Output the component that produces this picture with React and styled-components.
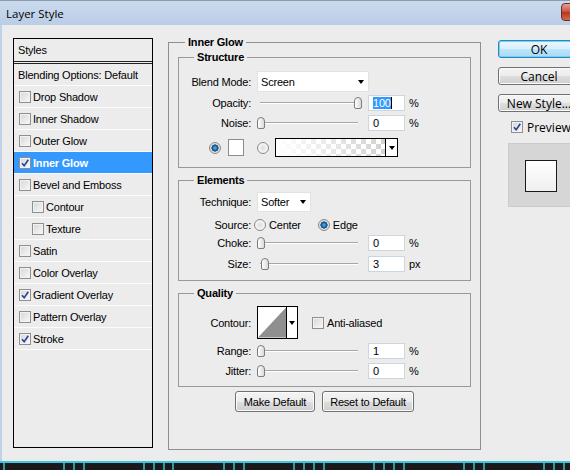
import React from "react";
import styled, { createGlobalStyle } from "styled-components";

const GlobalStyle = createGlobalStyle`
  html, body {
    margin: 0;
    padding: 0;
    background: #ececec;
  }
  body {
    font-family: "Liberation Sans", Arial, sans-serif;
    font-size: 11px;
    letter-spacing: -0.2px;
    color: #000;
  }
`;

const STYLE_ROWS = [
  { name: "Drop Shadow" },
  { name: "Inner Shadow" },
  { name: "Outer Glow" },
  { name: "Inner Glow", checked: true, active: true },
  { name: "Bevel and Emboss" },
  { name: "Contour", indent: true },
  { name: "Texture", indent: true },
  { name: "Satin" },
  { name: "Color Overlay" },
  { name: "Gradient Overlay", checked: true },
  { name: "Pattern Overlay" },
  { name: "Stroke", checked: true },
];

const TICKS = [3, 63, 73, 83, 143, 153, 163, 172, 223, 233, 243, 293, 303, 313, 323, 373, 383, 393, 403, 463, 473, 483, 543, 553, 563];

const Window = styled.div`
  width: 570px;
  height: 470px;
  display: flex;
  flex-direction: column;
  overflow: hidden;
  background: #ececec;
`;

const TitleBar = styled.div`
  height: 25px;
  flex: none;
  display: flex;
  align-items: center;
  justify-content: space-between;
  background: linear-gradient(#cbdbee, #b9cde6);
  border-top: 1px solid #8c9cb0;
  box-sizing: border-box;
  padding-left: 6px;
`;

const Title = styled.div`
  font-family: "Open Sans", "Liberation Sans", sans-serif;
  font-size: 11.5px;
  letter-spacing: 0;
  color: #000;
`;

const CloseButton = styled.div`
  width: 30px;
  height: 16px;
  margin-top: -3px;
  margin-right: -23px;
  border: 1px solid #6b2f2a;
  border-radius: 4px 0 0 4px;
  background: linear-gradient(#e3a092, #c9503f 50%, #b8321f 51%, #d06a4e);
`;

const Body = styled.div`
  flex: 1;
  display: flex;
  align-items: flex-start;
  border-left: 2px solid #bfd2ea;
  padding: 10px 0 0 11px;
  overflow: hidden;
`;

/* ---- left list ---- */
const StylesPanel = styled.div`
  width: 140px;
  height: 410px;
  flex: none;
  margin-top: 3px;
  box-sizing: border-box;
  border: 1px solid #000;
  display: flex;
  flex-direction: column;
`;

const PanelHeader = styled.div`
  height: 22px;
  display: flex;
  align-items: center;
  padding-left: 4px;
  border-bottom: 3px double #222;
`;

const BlendRow = styled.div`
  height: 21px;
  display: flex;
  align-items: center;
  padding-left: 4px;
  border-bottom: 1px solid #fbfbfb;
`;

const StyleRow = styled.div`
  height: 21px;
  display: flex;
  align-items: center;
  gap: 2px;
  padding-left: ${(p) => (p.$indent ? 18 : 5)}px;
  border-bottom: 1px solid #fbfbfb;
  background: ${(p) => (p.$active ? "#3399ff" : "transparent")};
  color: ${(p) => (p.$active ? "#fff" : "#000")};
  font-weight: ${(p) => (p.$active ? "bold" : "normal")};
`;

const CheckBox = styled.span`
  width: 12px;
  height: 12px;
  flex: none;
  box-sizing: border-box;
  border: 1px solid #8e8f8f;
  background: linear-gradient(135deg, #d6d6d6, #f9f9f9);
  display: inline-flex;
  align-items: center;
  justify-content: center;
  box-shadow: inset 0 0 0 1px #f2f2f2;
`;

const Check = ({ checked }) => (
  <CheckBox>
    {checked && (
      <svg width="10" height="10" viewBox="0 0 10 10">
        <path d="M2 5.2 L4.2 7.8 L8.3 1.8" fill="none" stroke="#2a3f9a" strokeWidth="1.6" />
      </svg>
    )}
  </CheckBox>
);

/* ---- main group ---- */
const MainGroup = styled.fieldset`
  width: 313px;
  height: 415px;
  flex: none;
  box-sizing: border-box;
  margin: 0 0 0 15px;
  padding: 0 9px;
  border: 1px solid #8f8f8f;
  min-inline-size: 0;
`;

const Legend = styled.legend`
  font-weight: bold;
  line-height: 14px;
  padding: 0 3px;
  margin-left: ${(p) => p.$ml}px;
`;

const Group = styled.fieldset`
  margin: ${(p) => p.$mt}px 0 0 0;
  padding: 0 0 ${(p) => p.$pb}px 0;
  border: 1px solid #999;
  min-inline-size: 0;
`;

const Row = styled.div`
  display: flex;
  align-items: center;
  height: ${(p) => p.$h || 20}px;
  margin-top: ${(p) => p.$mt || 0}px;
  padding-left: ${(p) => p.$pl || 0}px;
`;

const Label = styled.div`
  width: 72px;
  flex: none;
  text-align: right;
  margin-right: ${(p) => (p.$tight ? 3 : 6)}px;
`;

const Dropdown = styled.div`
  width: ${(p) => p.$w}px;
  height: ${(p) => p.$h}px;
  box-sizing: border-box;
  background: #fff;
  border: 1px solid #e2e2e2;
  display: flex;
  align-items: center;
  justify-content: space-between;
  padding: 0 4px 0 3px;
`;

const Arrow = styled.span`
  width: 0;
  height: 0;
  border-left: 3.5px solid transparent;
  border-right: 3.5px solid transparent;
  border-top: 4px solid #000;
`;

const SliderBox = styled.div`
  width: 105px;
  height: 14px;
  flex: none;
  position: relative;
`;

const Track = styled.div`
  position: absolute;
  left: 3px;
  right: 4px;
  top: 6px;
  height: 1px;
  background: #a6a6a6;
  border-bottom: 1px solid #fff;
`;

const Thumb = styled.div`
  position: absolute;
  top: 1px;
  width: 8px;
  height: 12px;
  box-sizing: border-box;
  border: 1px solid #7d7d7d;
  border-radius: 4px 4px 2px 2px;
  background: linear-gradient(90deg, #ffffff, #d9d9d9);
`;

const Slider = ({ pos }) => (
  <SliderBox>
    <Track />
    <Thumb style={{ left: Math.round(pos * 97) }} />
  </SliderBox>
);

const Field = styled.div`
  width: 37px;
  height: 16px;
  flex: none;
  box-sizing: border-box;
  margin-left: 6px;
  background: #fff;
  border: 1px solid #cdd6e0;
  padding-left: 4px;
  display: flex;
  align-items: center;
`;

const Selected = styled.span`
  background: #3399ff;
  color: #fff;
  border-right: 1px solid #000;
`;

const Unit = styled.div`
  margin-left: 4px;
`;

const Radio = styled.span`
  width: 12px;
  height: 12px;
  flex: none;
  box-sizing: border-box;
  border-radius: 50%;
  border: 1px solid #8a8a8a;
  background: ${(p) =>
    p.$on
      ? "radial-gradient(circle, #5ab4f0 0, #1a70b4 2.2px, #0d3a66 3.3px, #d4d4d4 3.8px, #f3f3f3 6px)"
      : "radial-gradient(circle, #dcdcdc 0, #eeeeee 3px, #fafafa 6px)"};
  margin-left: ${(p) => p.$ml || 0}px;
`;

const Option = styled.div`
  display: flex;
  align-items: center;
  gap: 3px;
  margin-left: ${(p) => p.$ml || 0}px;
`;

const Swatch = styled.div`
  width: 16px;
  height: 17px;
  box-sizing: border-box;
  margin-left: 7px;
  background: #fff;
  border: 1px solid #8c8c8c;
`;

const GradientPicker = styled.div`
  width: 123px;
  height: 19px;
  box-sizing: border-box;
  margin-left: 6px;
  border: 1px solid #000;
  display: flex;
`;

const GradientFill = styled.div`
  flex: 1;
  background: linear-gradient(to right, #fff 0%, rgba(255, 255, 255, 0) 100%),
    conic-gradient(#d2d2d2 25%, #fff 0 50%, #d2d2d2 0 75%, #fff 0) 0 0 / 10px 10px;
`;

const PickerArrow = styled.div`
  width: 11px;
  flex: none;
  border-left: 1px solid #000;
  background: #fff;
  display: flex;
  align-items: center;
  justify-content: center;
`;

const ContourPicker = styled.div`
  width: 41px;
  height: 33px;
  box-sizing: border-box;
  border: 1px solid #000;
  display: flex;
  background: #fff;
`;

const ContourArrow = styled(PickerArrow)`
  width: 10px;
`;

const CheckOption = styled.div`
  display: flex;
  align-items: center;
  gap: 3px;
  margin-left: 14px;
`;

const ButtonRow = styled.div`
  display: flex;
  justify-content: center;
  gap: 7px;
  margin-top: 4px;
`;

const Button = styled.div`
  width: ${(p) => p.$w}px;
  height: 21px;
  box-sizing: border-box;
  border: 1px solid #707070;
  border-radius: 3px;
  background: linear-gradient(#f4f4f4, #ececec 50%, #dedede 51%, #d0d0d0);
  box-shadow: inset 0 0 0 1px #fbfbfb;
  display: flex;
  align-items: center;
  justify-content: center;
`;

/* ---- right column ---- */
const RightColumn = styled.div`
  flex: none;
  margin: 5px 0 0 17px;
  display: flex;
  flex-direction: column;
  gap: 9px;
`;

const DialogButton = styled.div`
  width: 82px;
  height: 18px;
  box-sizing: border-box;
  border: 1px solid ${(p) => (p.$primary ? "#3c7fb1" : "#707070")};
  border-radius: 3px;
  background: ${(p) =>
    p.$primary
      ? "linear-gradient(#eaf6fd, #d9f0fc 50%, #bee6fd 51%, #a7d9f5)"
      : "linear-gradient(#f4f4f4, #ececec 50%, #dedede 51%, #d0d0d0)"};
  box-shadow: inset 0 0 0 1px ${(p) => (p.$primary ? "#62d6ff" : "#fbfbfb")};
  display: flex;
  align-items: center;
  justify-content: center;
  font-family: "Open Sans", "Liberation Sans", sans-serif;
  font-size: 12px;
  letter-spacing: 0;
`;

const PreviewToggle = styled.div`
  height: 12px;
  display: flex;
  align-items: center;
  gap: 4px;
  margin-left: 13px;
  font-family: "Open Sans", "Liberation Sans", sans-serif;
  font-size: 12px;
  letter-spacing: 0;
`;

const PreviewBox = styled.div`
  width: 80px;
  height: 64px;
  box-sizing: border-box;
  margin: 1px 0 0 10px;
  background: #d6d6d6;
  border: 1px solid #cbcbcb;
  padding: 16px 0 0 16px;
`;

const PreviewSwatch = styled.div`
  width: 32px;
  height: 32px;
  box-sizing: border-box;
  border: 1px solid #1a1a1a;
  background: linear-gradient(#ffffff, #efefef);
`;

/* ---- taskbar strip ---- */
const Taskbar = styled.div`
  height: 9px;
  flex: none;
  box-sizing: border-box;
  background: #1a181b;
  border-top: 2px solid #3cc8de;
  display: flex;
  align-items: flex-end;
`;

const Tick = styled.div`
  width: 2px;
  height: 7px;
  flex: none;
  margin-left: ${(p) => p.$ml}px;
  background: #2f9b9b;
`;

export default function App() {
  return (
    <Window>
      <GlobalStyle />
      <TitleBar>
        <Title>Layer Style</Title>
        <CloseButton />
      </TitleBar>
      <Body>
        <StylesPanel>
          <PanelHeader>Styles</PanelHeader>
          <BlendRow>Blending Options: Default</BlendRow>
          {STYLE_ROWS.map((r) => (
            <StyleRow key={r.name} $indent={r.indent} $active={r.active}>
              <Check checked={r.checked} />
              <span>{r.name}</span>
            </StyleRow>
          ))}
        </StylesPanel>

        <MainGroup>
          <Legend $ml={7}>Inner Glow</Legend>

          <Group $mt={1} $pb={10}>
            <Legend $ml={15}>Structure</Legend>
            <Row $mt={7} $h={21}>
              <Label>Blend Mode:</Label>
              <Dropdown $w={112} $h={21}>
                Screen
                <Arrow />
              </Dropdown>
            </Row>
            <Row $mt={1}>
              <Label>Opacity:</Label>
              <Slider pos={1} />
              <Field>
                <Selected>100</Selected>
              </Field>
              <Unit>%</Unit>
            </Row>
            <Row>
              <Label>Noise:</Label>
              <Slider pos={0} />
              <Field>0</Field>
              <Unit>%</Unit>
            </Row>
            <Row $mt={5} $h={19} $pl={30}>
              <Radio $on />
              <Swatch />
              <Radio $ml={13} />
              <GradientPicker>
                <GradientFill />
                <PickerArrow>
                  <Arrow />
                </PickerArrow>
              </GradientPicker>
            </Row>
          </Group>

          <Group $mt={5} $pb={6}>
            <Legend $ml={15}>Elements</Legend>
            <Row $mt={5}>
              <Label>Technique:</Label>
              <Dropdown $w={54} $h={20}>
                Softer
                <Arrow />
              </Dropdown>
            </Row>
            <Row $mt={4} $h={17}>
              <Label $tight>Source:</Label>
              <Option>
                <Radio />
                Center
              </Option>
              <Option $ml={17}>
                <Radio $on />
                Edge
              </Option>
            </Row>
            <Row>
              <Label>Choke:</Label>
              <Slider pos={0} />
              <Field>0</Field>
              <Unit>%</Unit>
            </Row>
            <Row $mt={1}>
              <Label>Size:</Label>
              <Slider pos={0.04} />
              <Field>3</Field>
              <Unit>px</Unit>
            </Row>
          </Group>

          <Group $mt={5} $pb={5}>
            <Legend $ml={15}>Quality</Legend>
            <Row $mt={6} $h={33}>
              <Label>Contour:</Label>
              <ContourPicker>
                <svg width="29" height="31" viewBox="0 0 29 31">
                  <polygon points="0,31 29,0 29,31" fill="#8f8f8f" />
                </svg>
                <ContourArrow>
                  <Arrow />
                </ContourArrow>
              </ContourPicker>
              <CheckOption>
                <Check />
                Anti-aliased
              </CheckOption>
            </Row>
            <Row $mt={2}>
              <Label>Range:</Label>
              <Slider pos={0} />
              <Field>1</Field>
              <Unit>%</Unit>
            </Row>
            <Row>
              <Label>Jitter:</Label>
              <Slider pos={0} />
              <Field>0</Field>
              <Unit>%</Unit>
            </Row>
          </Group>

          <ButtonRow>
            <Button $w={80}>Make Default</Button>
            <Button $w={92}>Reset to Default</Button>
          </ButtonRow>
        </MainGroup>

        <RightColumn>
          <DialogButton $primary>OK</DialogButton>
          <DialogButton>Cancel</DialogButton>
          <DialogButton>New Style...</DialogButton>
          <PreviewToggle>
            <Check checked />
            Preview
          </PreviewToggle>
          <PreviewBox>
            <PreviewSwatch />
          </PreviewBox>
        </RightColumn>
      </Body>
      <Taskbar>
        {TICKS.map((x, i) => (
          <Tick key={x} $ml={i === 0 ? x : x - TICKS[i - 1] - 2} />
        ))}
      </Taskbar>
    </Window>
  );
}
